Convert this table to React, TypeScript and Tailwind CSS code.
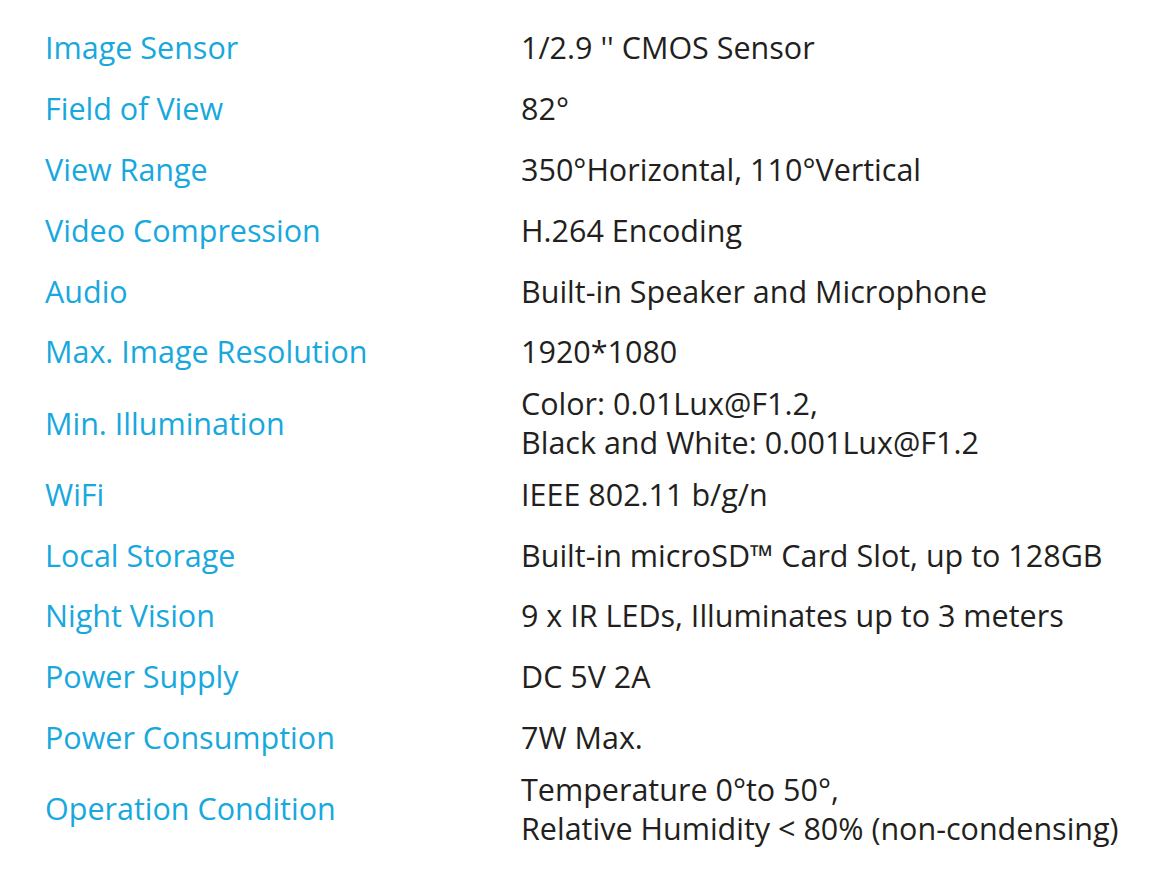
const specs: { label: string; value: string[] }[] = [
  { label: 'Image Sensor', value: ["1/2.9 '' CMOS Sensor"] },
  { label: 'Field of View', value: ['82°'] },
  { label: 'View Range', value: ['350°Horizontal, 110°Vertical'] },
  { label: 'Video Compression', value: ['H.264 Encoding'] },
  { label: 'Audio', value: ['Built-in Speaker and Microphone'] },
  { label: 'Max. Image Resolution', value: ['1920*1080'] },
  { label: 'Min. Illumination', value: ['Color: 0.01Lux@F1.2,', 'Black and White: 0.001Lux@F1.2'] },
  { label: 'WiFi', value: ['IEEE 802.11 b/g/n'] },
  { label: 'Local Storage', value: ['Built-in microSD™ Card Slot, up to 128GB'] },
  { label: 'Night Vision', value: ['9 x IR LEDs, Illuminates up to 3 meters'] },
  { label: 'Power Supply', value: ['DC 5V 2A'] },
  { label: 'Power Consumption', value: ['7W Max.'] },
  { label: 'Operation Condition', value: ['Temperature 0°to 50°,', 'Relative Humidity < 80% (non-condensing)'] },
];

export default function App() {
  return (
    <div className="min-h-[877px] w-[1158px] bg-white pt-[17px] font-['Open_Sans',sans-serif] text-[30.5px] leading-[39px]">
      {specs.map((row) => (
        <div
          key={row.label}
          className={
            row.value.length > 1
              ? 'grid h-[81.4px] grid-cols-[476px_1fr] items-center pl-[45px]'
              : 'grid h-[60.9px] grid-cols-[476px_1fr] items-center pl-[45px]'
          }
        >
          <div className="text-[#17a8dd]">{row.label}</div>
          <div className="text-[#231f20]">
            {row.value.map((line) => (
              <div key={line}>{line}</div>
            ))}
          </div>
        </div>
      ))}
    </div>
  );
}
